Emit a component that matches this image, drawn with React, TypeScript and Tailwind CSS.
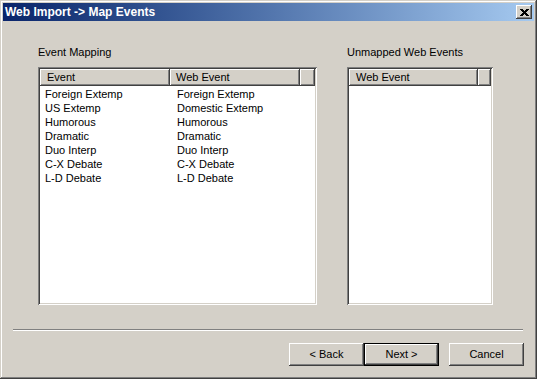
import React from "react";

const rows: [string, string][] = [
  ["Foreign Extemp", "Foreign Extemp"],
  ["US Extemp", "Domestic Extemp"],
  ["Humorous", "Humorous"],
  ["Dramatic", "Dramatic"],
  ["Duo Interp", "Duo Interp"],
  ["C-X Debate", "C-X Debate"],
  ["L-D Debate", "L-D Debate"],
];

const raised =
  "shadow-[inset_-1px_-1px_#404040,inset_1px_1px_#ffffff,inset_-2px_-2px_#808080,inset_2px_2px_#d4d0c8]";
const headerCell =
  "shadow-[inset_-1px_-1px_#404040,inset_1px_1px_#ffffff,inset_-2px_-2px_#808080]";
const sunken =
  "shadow-[inset_1px_1px_#808080,inset_-1px_-1px_#ffffff,inset_2px_2px_#404040,inset_-2px_-2px_#d4d0c8]";

function Btn({ label, def }: { label: string; def?: boolean }) {
  if (def) {
    return (
      <div className="w-[75px] h-[23px] border border-black">
        <div className={`w-full h-full flex items-center justify-center ${raised}`}>{label}</div>
      </div>
    );
  }
  return <div className={`w-[75px] h-[23px] flex items-center justify-center ${raised}`}>{label}</div>;
}

export default function App() {
  return (
    <div
      className="w-[537px] h-[379px] bg-[#d4d0c8] p-[3px] flex flex-col text-[11px] text-black shadow-[inset_-1px_-1px_#404040,inset_1px_1px_#d4d0c8,inset_-2px_-2px_#808080,inset_2px_2px_#ffffff]"
      style={{ fontFamily: '"Liberation Sans", Arial, sans-serif' }}
    >
      {/* title bar */}
      <div className="h-[18px] flex items-center justify-between pl-[2px] pr-[2px] bg-gradient-to-r from-[#0a246a] to-[#a6caf0]">
        <span className="text-white font-bold text-[12px] leading-none">Web Import -&gt; Map Events</span>
        <div className={`w-[16px] h-[14px] bg-[#d4d0c8] flex items-center justify-center ${raised}`}>
          <svg width="9" height="7" viewBox="0 0 9 7" shapeRendering="crispEdges">
            <path d="M0 0h3v1H0zM6 0h3v1H6zM1 1h3v1H1zM5 1h3v1H5zM2 2h5v1H2zM3 3h3v1H3zM2 4h5v1H2zM1 5h3v1H1zM5 5h3v1H5zM0 6h3v1H0zM6 6h3v1H6z" fill="#000" />
          </svg>
        </div>
      </div>

      {/* lists */}
      <div className="flex pl-[35px] pt-[25px]">
        <div className="w-[279px] flex flex-col">
          <div className="h-[13px] leading-[13px]">Event Mapping</div>
          <div className={`mt-[8px] h-[238px] bg-white p-[2px] ${sunken}`}>
            <div className="flex h-[17px] bg-[#d4d0c8]">
              <div className={`w-[130px] flex items-center pl-[7px] ${headerCell}`}>Event</div>
              <div className={`w-[130px] flex items-center pl-[6px] ${headerCell}`}>Web Event</div>
              <div className={`flex-1 ${headerCell}`} />
            </div>
            <div className="pt-[1px]">
              {rows.map(([a, b]) => (
                <div key={a} className="flex h-[14px] leading-[14px]">
                  <div className="w-[130px] pl-[5px]">{a}</div>
                  <div className="w-[130px] pl-[7px]">{b}</div>
                </div>
              ))}
            </div>
          </div>
        </div>
        <div className="ml-[30px] w-[146px] flex flex-col">
          <div className="h-[13px] leading-[13px]">Unmapped Web Events</div>
          <div className={`mt-[8px] h-[238px] bg-white p-[2px] ${sunken}`}>
            <div className="flex h-[17px] bg-[#d4d0c8]">
              <div className={`w-[129px] flex items-center pl-[7px] ${headerCell}`}>Web Event</div>
              <div className={`flex-1 ${headerCell}`} />
            </div>
          </div>
        </div>
      </div>

      {/* separator */}
      <div className="mt-[24px] ml-[10px] w-[510px] h-[2px] border-t border-t-[#808080] border-b border-b-white" />

      {/* buttons */}
      <div className="mt-[12px] flex justify-end pr-[10px]">
        <Btn label="< Back" />
        <Btn label="Next >" def />
        <div className="w-[10px]" />
        <Btn label="Cancel" />
      </div>
    </div>
  );
}
